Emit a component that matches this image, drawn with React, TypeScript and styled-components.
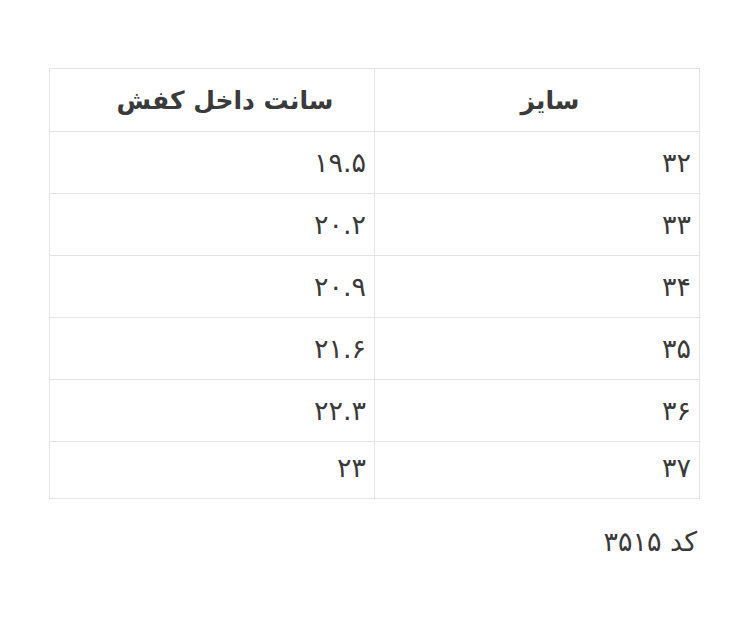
import styled, { createGlobalStyle } from "styled-components";

const sizes = [
  { size: "۳۲", cm: "۱۹.۵" },
  { size: "۳۳", cm: "۲۰.۲" },
  { size: "۳۴", cm: "۲۰.۹" },
  { size: "۳۵", cm: "۲۱.۶" },
  { size: "۳۶", cm: "۲۲.۳" },
  { size: "۳۷", cm: "۲۳" },
];

const App: React.FC = () => {
  return (
    <>
      <GlobalStyle />
      <Page dir="rtl">
        <SizeTable>
          <thead>
            <tr>
              <HeadCell>سایز</HeadCell>
              <HeadCell>سانت داخل کفش</HeadCell>
            </tr>
          </thead>
          <tbody>
            {sizes.map((row, i) => (
              <tr key={row.size}>
                <Cell $last={i === sizes.length - 1}>{row.size}</Cell>
                <Cell $last={i === sizes.length - 1}>{row.cm}</Cell>
              </tr>
            ))}
          </tbody>
        </SizeTable>
        <ProductCode>کد ۳۵۱۵</ProductCode>
      </Page>
    </>
  );
};

const GlobalStyle = createGlobalStyle`
  body {
    margin: 0;
    background: #fff;
    font-family: "DejaVu Sans", "Noto Sans", sans-serif;
    color: #3a3a3a;
  }
`;

const Page = styled.div`
  padding: 68px 50px 0 49px;
`;

const SizeTable = styled.table`
  width: 651px;
  border-collapse: collapse;
  table-layout: fixed;
  border: 1px solid #e4e4e4;
`;

const HeadCell = styled.th`
  height: 62px;
  padding: 0 0 0 26px;
  border: 1px solid #e4e4e4;
  text-align: center;
  font-size: 25px;
  font-weight: bold;
  color: #3a3a3a;
  vertical-align: middle;
`;

const Cell = styled.td<{ $last?: boolean }>`
  height: ${(p) => (p.$last ? "57px" : "62px")};
  padding: ${(p) => (p.$last ? "0 8px 6px" : "0 8px")};
  box-sizing: border-box;
  border: 1px solid #e4e4e4;
  text-align: right;
  font-size: 27px;
  vertical-align: middle;
`;

const ProductCode = styled.p`
  margin: 25px 3px 0 0;
  font-size: 27px;
  line-height: 36px;
`;

export default App;
